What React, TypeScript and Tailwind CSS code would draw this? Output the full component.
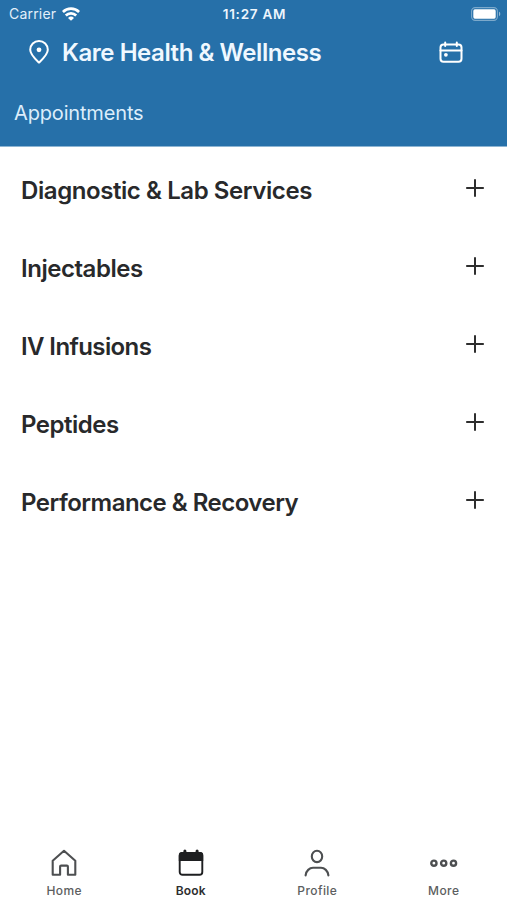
import type { ReactNode } from "react";

const categories = [
  { name: "Diagnostic & Lab Services", tracking: "tracking-[-0.42px]" },
  { name: "Injectables", tracking: "tracking-[-0.46px]" },
  { name: "IV Infusions", tracking: "tracking-[-0.6px]" },
  { name: "Peptides", tracking: "tracking-[-0.5px]" },
  { name: "Performance & Recovery", tracking: "tracking-[-0.51px]" },
];

function WifiIcon() {
  return (
    <svg width="18" height="14" viewBox="0 0 18 14" fill="none" stroke="currentColor" strokeWidth="2.7">
      <path d="M.9 5a11.5 11.5 0 0 1 16.2 0" />
      <path d="M3.8 8.5a7.4 7.4 0 0 1 10.4 0" />
      <path d="M9 13.8 6 10.9a4.3 4.3 0 0 1 6 0Z" fill="currentColor" stroke="none" />
    </svg>
  );
}

function BatteryIcon() {
  return (
    <svg width="31" height="14" viewBox="0 0 31 14" fill="none">
      <rect x=".6" y=".6" width="25.8" height="12.8" rx="3.6" stroke="#fff" strokeOpacity=".4" strokeWidth="1.1" />
      <rect x="2.3" y="2.3" width="22.4" height="9.4" rx="1.6" fill="#fff" />
      <path d="M28 4.8c1.7.6 1.7 3.8 0 4.4Z" fill="#fff" fillOpacity=".5" />
    </svg>
  );
}

function PinIcon() {
  return (
    <svg width="20" height="24" viewBox="0 0 20 24" fill="none">
      <path
        d="M10 22.6C6.2 19 1.2 14.6 1.2 9.8a8.8 8.8 0 0 1 17.6 0c0 4.8-5 9.2-8.8 12.8Z"
        stroke="currentColor"
        strokeWidth="2"
        strokeLinejoin="round"
      />
      <circle cx="10" cy="9.8" r="2.4" fill="currentColor" />
    </svg>
  );
}

function CalendarIcon() {
  return (
    <svg width="24" height="22" viewBox="0 0 24 22" fill="none" stroke="currentColor" strokeWidth="2" strokeLinecap="round">
      <rect x="1.5" y="3.6" width="21" height="17.2" rx="3" />
      <path d="M1.5 9.6h21M6.2 1.4v3.6M17.8 1.4v3.6" />
      <circle cx="6.9" cy="13.8" r="1.9" fill="currentColor" stroke="none" />
    </svg>
  );
}

function PlusIcon() {
  return (
    <svg width="18" height="18" viewBox="0 0 18 18" stroke="#2e2e2e" strokeWidth="2">
      <path d="M0.2 9h17.6M9 .2v17.6" />
    </svg>
  );
}

function HomeIcon() {
  return (
    <svg width="26" height="28" viewBox="0 0 26 28" fill="none" stroke="#4d4f51" strokeWidth="2.1" strokeLinejoin="round">
      <path d="M1.7 11.7 13 1.8l11.3 9.9v14.1h-7.4v-8.2a1 1 0 0 0-1-1h-5.8a1 1 0 0 0-1 1v8.2H1.7Z" />
    </svg>
  );
}

function BookIcon() {
  return (
    <svg width="26" height="28" viewBox="0 0 26 28" fill="none">
      <rect x="1.7" y="4" width="22.6" height="21.8" rx="2.8" stroke="#1e1f21" strokeWidth="1.9" />
      <path d="M.8 12V6A3 3 0 0 1 3.8 3h18.4a3 3 0 0 1 3 3v6Z" fill="#1e1f21" />
      <path d="M6.9 2v3M19.1 2v3" stroke="#1e1f21" strokeWidth="3" strokeLinecap="round" />
    </svg>
  );
}

function ProfileIcon() {
  return (
    <svg width="26" height="28" viewBox="0 0 26 28" fill="none" stroke="#4d4f51" strokeWidth="2.1" strokeLinecap="round">
      <ellipse cx="13" cy="7.4" rx="5.2" ry="5.7" />
      <path d="M1.6 26.4c.4-4.6 4-7.6 7.4-7.6h8c3.4 0 7 3 7.4 7.6" />
    </svg>
  );
}

function MoreIcon() {
  return (
    <svg width="28" height="28" viewBox="0 0 28 28" fill="none" stroke="#4d4f51" strokeWidth="2.4">
      <circle cx="3.9" cy="14.2" r="2.6" />
      <circle cx="13.7" cy="14.2" r="2.6" />
      <circle cx="23.5" cy="14.2" r="2.6" />
    </svg>
  );
}

function Tab({ label, active, children }: { label: string; active?: boolean; children: ReactNode }) {
  return (
    <button className="flex w-[126.5px] flex-col items-center">
      {children}
      <span
        className={
          active
            ? "mt-[6px] text-[12px] font-semibold leading-4 tracking-[0.1px] text-[#2d2e30]"
            : "mt-[6px] text-[12px] font-medium leading-4 tracking-[0.4px] text-[#5c5e60]"
        }
      >
        {label}
      </span>
    </button>
  );
}

export default function App() {
  return (
    <div className="flex h-screen w-full flex-col overflow-hidden bg-white font-['Inter','Liberation_Sans',sans-serif]">
      <header className="h-[147px] shrink-0 border-b border-[#8db5d3] bg-[#2670a9] text-white">
        <div className="grid h-[27px] grid-cols-3 items-center pl-[9px] pr-[5px]">
          <div className="flex items-center gap-[6px] text-[14px]">
            <span className="tracking-[0.2px] text-[#e3effa]">Carrier</span>
            <WifiIcon />
          </div>
          <span className="-ml-[2px] pt-px text-center text-[13.5px] font-semibold tracking-[0.75px] text-[#eef6fd]">
            11:27 AM
          </span>
          <div className="flex justify-end">
            <BatteryIcon />
          </div>
        </div>
        <div className="flex h-[50px] items-center pl-[29px] pr-[44px]">
          <PinIcon />
          <h1 className="ml-[13px] flex-1 pt-px text-[24px] font-semibold tracking-[-0.45px] text-[#eff8ff]">
            Kare Health &amp; Wellness
          </h1>
          <CalendarIcon />
        </div>
        <p className="mt-[22px] pl-[14px] text-[20px] leading-7 tracking-[-0.16px] text-[#dcedfb]">Appointments</p>
      </header>

      <main className="flex-1 pt-[4px]">
        {categories.map((c) => (
          <div key={c.name} className="flex h-[78.1px] items-center justify-between pl-[21px] pr-[23px]">
            <h2 className={`pt-[2px] text-[24px] font-semibold text-[#28292b] ${c.tracking}`}>{c.name}</h2>
            <span className="pb-[4px]">
              <PlusIcon />
            </span>
          </div>
        ))}
      </main>

      <nav className="flex h-[51px] shrink-0 pl-px">
        <Tab label="Home">
          <HomeIcon />
        </Tab>
        <Tab label="Book" active>
          <BookIcon />
        </Tab>
        <Tab label="Profile">
          <ProfileIcon />
        </Tab>
        <Tab label="More">
          <MoreIcon />
        </Tab>
      </nav>
    </div>
  );
}
